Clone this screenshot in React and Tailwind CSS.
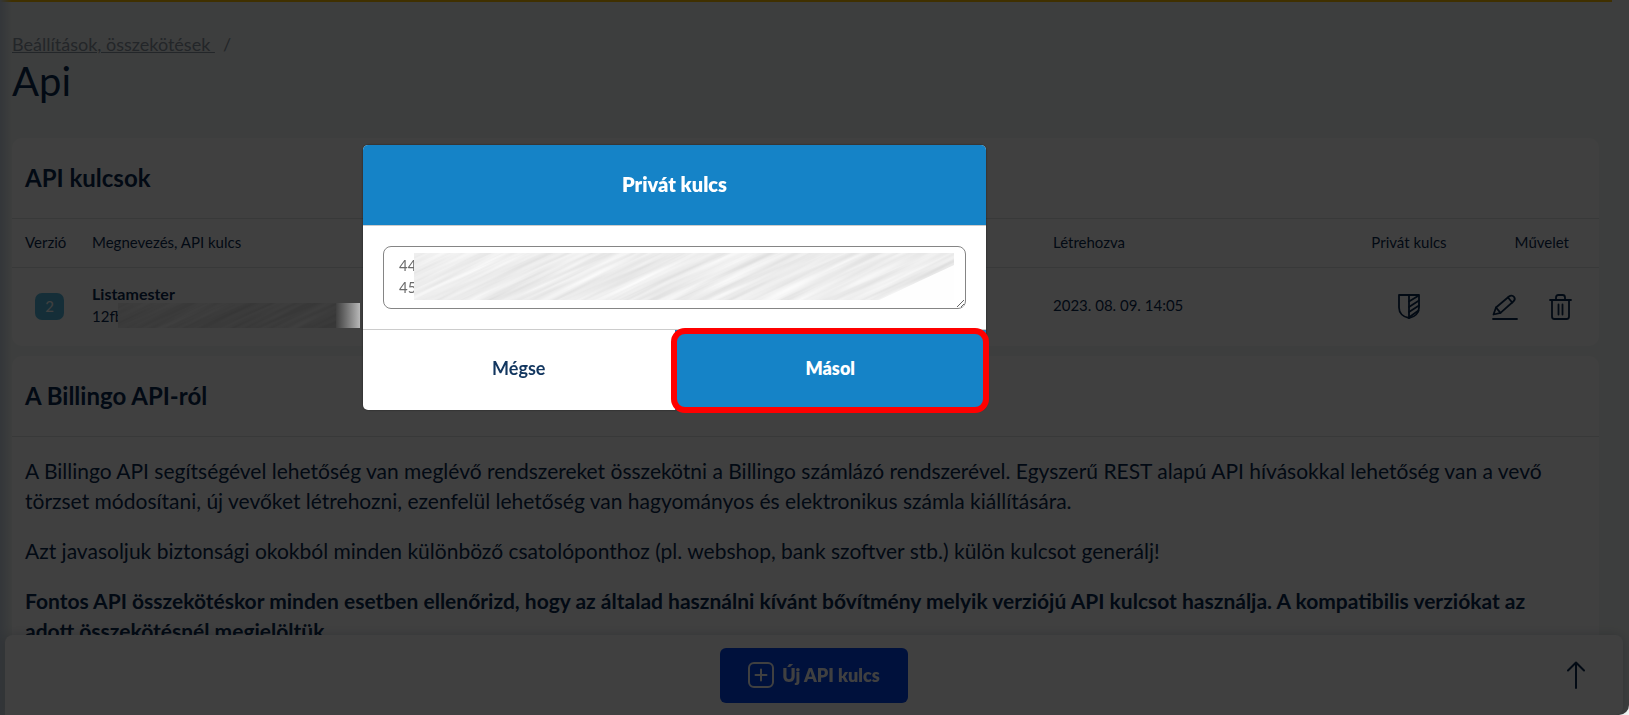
import React from 'react';

const apiKeys = [
  { id: 1, version: 2, name: 'Listamester', key: '12fb', createdAt: '2023. 08. 09. 14:05' },
];

function ShieldIcon() {
  return (
    <svg width="22" height="25" viewBox="0 0 22 25" fill="none" stroke="currentColor" strokeWidth="1.8" strokeLinejoin="round" strokeLinecap="round">
      <path d="M1 1h20v12.500c0 5.500-4 9.500-10 10.500C5 23 1 19 1 13.500z" />
      <path d="M11 1v23" />
      <path d="M11 7.500l9-5.500M11 13l10-6.500M11 18l10-6.500M11.500 23l9-6.500" />
    </svg>
  );
}

function PencilIcon() {
  return (
    <svg width="26" height="26" viewBox="0 0 26 26" fill="none" stroke="currentColor" strokeWidth="1.8" strokeLinejoin="round" strokeLinecap="round">
      <path d="M1 25h24" />
      <path d="M1.500 20.500l2.500-7L17 2.500c1.600-1.300 3.700-1.200 4.900.300 1.200 1.500 1 3.400-.600 4.700L8.500 18.800z" />
      <path d="M4 13.500l4.500 5.300M16 3.500l4.200 5" />
    </svg>
  );
}

function TrashIcon() {
  return (
    <svg width="23" height="26" viewBox="0 0 23 26" fill="none" stroke="currentColor" strokeWidth="1.8" strokeLinejoin="round" strokeLinecap="round">
      <path d="M1 6h21M7 6V3.500C7 2 7.800 1 9.300 1h4.400C15.200 1 16 2 16 3.500V6" />
      <path d="M3 6v16.500c0 1.500.800 2.500 2.300 2.500h12.400c1.500 0 2.300-1 2.300-2.500V6" />
      <path d="M9.500 10.500v10M13.500 10.500v10" />
    </svg>
  );
}

function PlusIcon() {
  return (
    <svg width="26" height="26" viewBox="0 0 26 26" fill="none" stroke="currentColor" strokeWidth="2" strokeLinecap="round">
      <rect x="1" y="1" width="24" height="24" rx="5" />
      <path d="M13 7.500v11M7.500 13h11" />
    </svg>
  );
}

function ArrowUpIcon() {
  return (
    <svg width="18" height="28" viewBox="0 0 18 28" fill="none" stroke="currentColor" strokeWidth="2" strokeLinecap="round" strokeLinejoin="round">
      <path d="M9 27V1.500M1 9.500l8-8 8 8" />
    </svg>
  );
}

// Diagonal brush texture that hides the secret part of a key
function Smudge({ id, className, dark }) {
  return (
    <svg className={className} aria-hidden="true">
      <defs>
        <filter id={id} x="0" y="0" width="100%" height="100%" colorInterpolationFilters="sRGB">
          <feTurbulence type="fractalNoise" baseFrequency="0.008 0.18" numOctaves="3" seed="7" />
          <feColorMatrix
            values={
              dark
                ? '0.06 0 0 0 0.2 0.06 0 0 0 0.2 0.06 0 0 0 0.2 0 0 0 0 1'
                : '0.16 0 0 0 0.85 0.16 0 0 0 0.85 0.16 0 0 0 0.85 0 0 0 0 1'
            }
          />
        </filter>
      </defs>
      <g transform="rotate(-25)">
        <rect x="-60" y="-20" width="660" height="340" filter={`url(#${id})`} />
      </g>
      {!dark && <path d="M540 12L465 47h75z" fill="#fefefe" />}
    </svg>
  );
}

function Page() {
  return (
    <div className="h-screen overflow-hidden bg-[#f4f8f6] text-[#0b2a4f]">
      <div className="mr-[17px] h-[2px] bg-[#ffc000]" />
      <main className="pl-3 pr-[30px]">
        <nav className="pt-[29px] text-[18px] leading-[26px] text-[#8c96a3]">
          <a href="#beallitasok" className="whitespace-pre underline">Beállítások, összekötések </a>
          <span className="ml-2">/</span>
        </nav>
        <h1 className="mb-[33px] text-[40px] leading-[48px]">Api</h1>

        <section className="mb-[10px] rounded-[10px] bg-white">
          <h2 className="flex h-20 items-center px-[13px] text-[24px] font-bold">API kulcsok</h2>
          <table className="w-full table-fixed text-left text-[15px]">
            <thead>
              <tr className="h-[49px] border-y border-[#dde1e4]">
                <th className="w-[68px] pb-0.5 pl-[13px] font-normal">Verzió</th>
                <th className="pb-0.5 pl-3 font-normal">Megnevezés, API kulcs</th>
                <th className="w-[308px] pb-0.5 pl-3 font-normal">Létrehozva</th>
                <th className="w-[120px] pb-0.5 text-center font-normal">Privát kulcs</th>
                <th className="w-[130px] pb-0.5 pr-[30px] text-right font-normal">Művelet</th>
              </tr>
            </thead>
            <tbody>
              {apiKeys.map((item) => (
                <tr key={item.id} className="h-[78px]">
                  <td className="pl-[23px]">
                    <span className="flex h-[27px] w-[29px] items-center justify-center rounded-[7px] bg-[#55b9dd] pb-0.5 text-white">{item.version}</span>
                  </td>
                  <td className="pb-1 pl-3 leading-[22px]">
                    <div className="text-[16px] font-bold">{item.name}</div>
                    <div>{item.key}</div>
                  </td>
                  <td className="pb-1 pl-3">{item.createdAt}</td>
                  <td>
                    <button className="mx-auto block" aria-label="Privát kulcs"><ShieldIcon /></button>
                  </td>
                  <td>
                    <div className="flex justify-end gap-[31px] pr-[27px]">
                      <button aria-label="Szerkesztés"><PencilIcon /></button>
                      <button aria-label="Törlés"><TrashIcon /></button>
                    </div>
                  </td>
                </tr>
              ))}
            </tbody>
          </table>
        </section>

        <section className="rounded-[10px] bg-white">
          <h2 className="flex h-[81px] items-center border-b border-[#dde1e4] px-[13px] text-[24px] font-bold">A Billingo API-ról</h2>
          <div className="space-y-5 py-[19px] pl-[13px] pr-[30px] text-[21px] leading-[30px]">
            <p>
              A Billingo API segítségével lehetőség van meglévő rendszereket összekötni a Billingo számlázó rendszerével. Egyszerű REST alapú API hívásokkal lehetőség van a vevő törzset módosítani, új vevőket létrehozni, ezenfelül lehetőség van hagyományos és elektronikus számla kiállítására.
            </p>
            <p>Azt javasoljuk biztonsági okokból minden különböző csatolóponthoz (pl. webshop, bank szoftver stb.) külön kulcsot generálj!</p>
            <p className="font-bold">
              Fontos API összekötéskor minden esetben ellenőrizd, hogy az általad használni kívánt bővítmény melyik verziójú API kulcsot használja. A kompatibilis verziókat az adott összekötésnél megjelöltük.
            </p>
          </div>
        </section>
      </main>

      <div className="fixed inset-y-0 left-0 w-3 bg-linear-to-r from-[#ccd8e4] to-transparent" />
      <footer className="fixed bottom-0 left-[5px] right-[6px] grid h-20 grid-cols-3 items-center rounded-t-[8px] rounded-br-[8px] bg-white px-[38px] shadow-[0_0_12px_rgba(0,30,60,0.2)]">
        <span />
        <button className="flex h-[55px] w-[188px] items-center justify-center gap-2 justify-self-center rounded-[6px] bg-[#0045f0] text-[18px] font-extrabold text-white">
          <PlusIcon />
          Új API kulcs
        </button>
        <button className="justify-self-end" aria-label="Vissza a tetejére"><ArrowUpIcon /></button>
      </footer>
    </div>
  );
}

function PrivateKeyModal() {
  return (
    <div className="fixed inset-0 flex items-start justify-center rounded-br-[10px] bg-black/75 pr-[280px] pt-[145px]">
      <div role="dialog" aria-labelledby="modal-title" className="w-[623px] rounded-[5px] bg-white shadow-[0_0_2px_rgba(0,0,0,0.6)]">
        <h3 id="modal-title" className="flex h-[81px] items-center justify-center rounded-t-[5px] border-b border-[#cccccc] bg-[#1583c7] pb-0.5 text-[20px] font-extrabold text-white">Privát kulcs</h3>
        <div className="relative px-5 py-5">
          <textarea
            aria-label="Privát kulcs"
            defaultValue={'44\n45'}
            className="block h-[63px] w-full resize rounded-[8px] border border-[#858585] bg-white px-[15px] py-[7px] text-[15px] leading-[22px] text-[#6b6b6b]"
          />
          <Smudge id="smudge-light" className="absolute left-[51px] top-[27px] h-[47px] w-[540px]" />
        </div>
        <div className="grid grid-cols-2 border-t border-[#cccccc] text-[18px]">
          <button className="h-20 pb-1 font-bold text-[#12365f]">Mégse</button>
          <button className="relative h-20 rounded-br-[5px] bg-[#1583c7] pb-1 font-extrabold text-white">
            Másol
            <span className="absolute -bottom-[3px] -left-1 -right-[3px] -top-0.5 rounded-[14px] border-[6px] border-[#ff0000]" />
          </button>
        </div>
      </div>
    </div>
  );
}

function App() {
  return (
    <div className="font-['Lato','Noto_Sans',sans-serif]">
      <Page />
      <PrivateKeyModal />
      {/* Hidden part of the key in the table row */}
      <div className="fixed left-[118px] top-[303px] h-[25px] w-[242px]" aria-hidden="true">
        <Smudge id="smudge-dark" dark className="h-full w-full" />
        <div className="absolute inset-y-0 right-0 w-6 bg-linear-to-r from-[#404040] to-[#b8b8b8]" />
      </div>
    </div>
  );
}

export default App;
